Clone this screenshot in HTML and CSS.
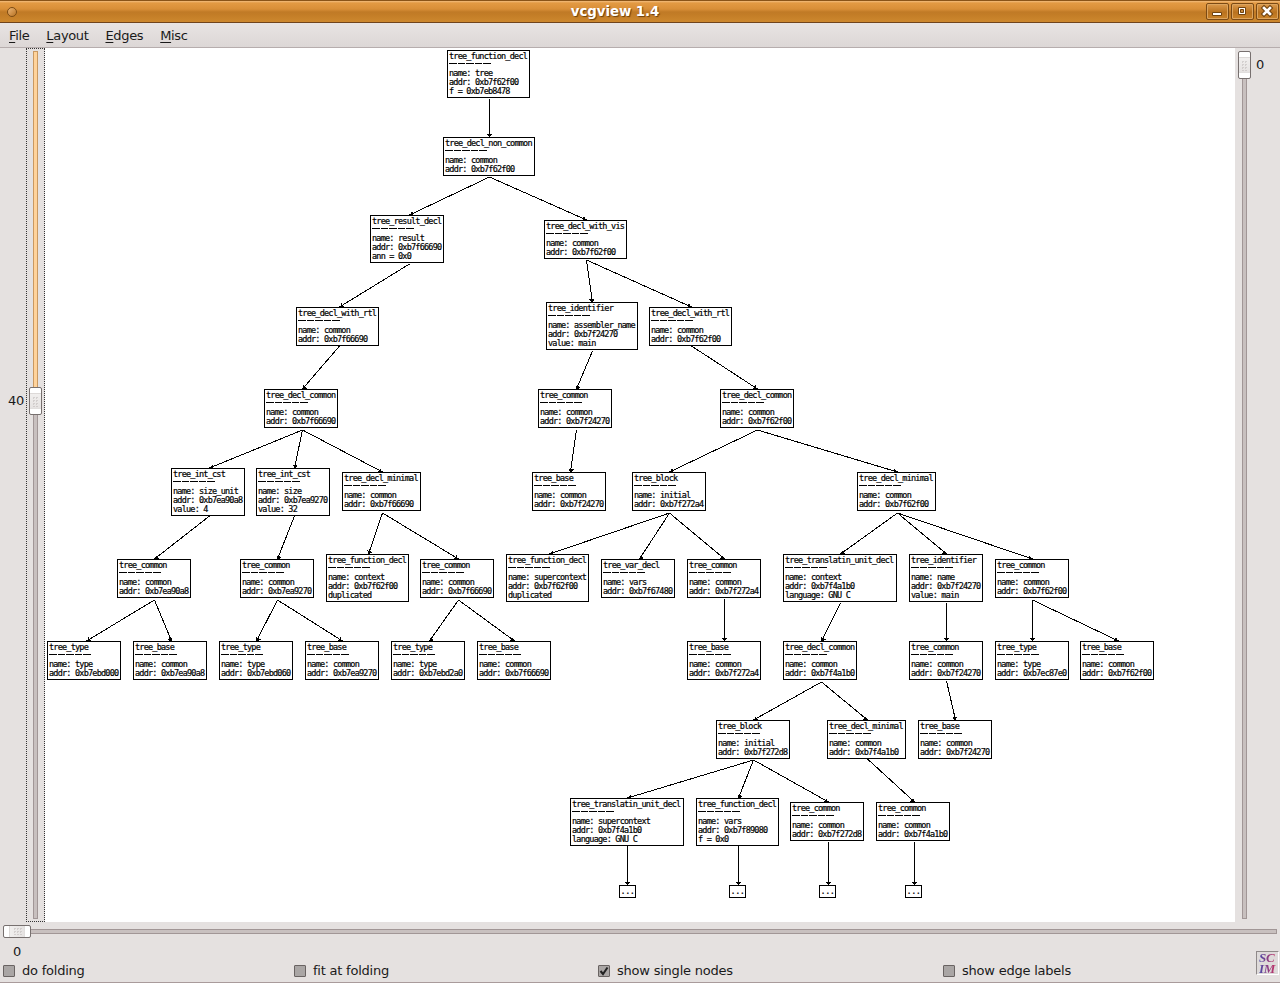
FILE: index.html
```html
<!DOCTYPE html>
<html lang="en">
<head>
<meta charset="utf-8">
<title>vcgview 1.4</title>
<link rel="stylesheet" href="styles.css">
</head>
<body>
<div class="window">
  <header class="titlebar">
    <span class="orb"></span>
    <h1 class="title">vcgview 1.4</h1>
    <div class="controls">
      <span class="control"><svg width="21" height="15" viewBox="0 0 21 15"><path d="M5.500 8.500h9v3h-9z" fill="#fff" stroke="#70430f"/></svg></span>
      <span class="control"><svg width="21" height="15" viewBox="0 0 21 15"><path d="M6.500 3.500h7v7h-7z" fill="#fff" stroke="#70430f"/><path d="M8.500 5.500h3v3h-3z" fill="#c98b3e" stroke="#70430f"/></svg></span>
      <span class="control"><svg width="21" height="15" viewBox="0 0 21 15"><path d="M7 4l6 6M13 4l-6 6" stroke="#70430f" stroke-width="4.600" stroke-linecap="square"/><path d="M7 4l6 6M13 4l-6 6" stroke="#fff" stroke-width="2.600" stroke-linecap="square"/></svg></span>
    </div>
  </header>
  <nav class="menubar">
    <span><u>F</u>ile</span><span><u>L</u>ayout</span><span><u>E</u>dges</span><span><u>M</u>isc</span>
  </nav>
  <main class="work">
    <div class="side left">
      <span class="value">40</span>
      <div class="scale focus"><div class="trough"><div class="fill"></div></div><div class="thumb at-forty"></div></div>
    </div>
    <section class="canvas" id="canvas">
      <svg class="edges" id="edges" width="1190" height="874" viewBox="45 48 1190 874"></svg>
    </section>
    <div class="side right">
      <div class="scale"><div class="trough"></div><div class="thumb at-start"></div></div>
      <span class="value">0</span>
    </div>
  </main>
  <div class="hscale"><div class="htrough"></div><div class="thumb wide"></div></div>
  <div class="hvalue">0</div>
  <footer class="options">
    <label><i class="box"></i>do folding</label>
    <label><i class="box"></i>fit at folding</label>
    <label><i class="box"><svg width="10" height="10" viewBox="0 0 10 10"><path d="M1.500 5l2.500 3L8.500 1.500" fill="none" stroke="#222" stroke-width="2"/></svg></i>show single nodes</label>
    <label><i class="box"></i>show edge labels</label>
  </footer>
  <div class="scim"><span>SC</span><span>IM</span></div>
</div>
<script src="graph.js"></script>
</body>
</html>
```
FILE: styles.css
```css
* { box-sizing: border-box; }
body { margin: 0; background: #e5e1e0; font: 13px/16px "DejaVu Sans", sans-serif; letter-spacing: -.220px; color: #1a1a1a; }
.window { position: relative; width: 1280px; height: 983px; display: flex; flex-direction: column; overflow: hidden; border-bottom: 1px solid #a99b9b; }
.titlebar { height: 23px; display: flex; align-items: center; padding: 0 1px 0 7px; border-top: 1px solid #8a5418; border-bottom: 1px solid #70441c;
  background: linear-gradient(#f3bd7c 0, #e39a43 2px, #d98f38 8px, #c07a26 11px, #c37d27 14px, #cd882e 21px); }
.orb { width: 10px; height: 10px; border: 1px solid #7d4c14; border-radius: 50%; background: linear-gradient(135deg, #edb677, #b87323); }
.title { flex: 1; margin: 0; padding: 0 0 1px 7px; text-align: center; font-size: 13.330px; line-height: 19px; letter-spacing: -.050px; font-weight: bold; color: #fff; text-shadow: 1px 1px 1px #6d3f0b; }
.controls { display: flex; gap: 2px; }
.control { width: 23px; height: 17px; border: 1px solid #7b4a14; border-radius: 2px; background: linear-gradient(#dc9a4c, #b9721f 55%, #cb8429); box-shadow: inset 0 0 0 1px #dda55f; }
.control svg { display: block; }
.menubar { height: 25px; display: flex; gap: 17px; padding: 5px 9px 3px; border-bottom: 1px solid #b6adad; background: linear-gradient(#e8e4e3, #dcd7d6); letter-spacing: -.350px; }
.menubar u { text-underline-offset: 2px; }
.work { height: 874px; display: flex; }
.side { width: 45px; display: flex; }
.left .value { width: 26px; padding: 345px 0 0 8px; }
.right .value { padding: 9px 0 0 2px; }
.scale { position: relative; width: 19px; padding: 3px 0 3px 7px; }
.focus { border: 1px dotted #333; padding: 2px 0 2px 6px; }
.trough { width: 5px; height: 100%; border: 1px solid #a19696; background: #c8c0bf; }
.fill { width: 5px; height: 338px; margin: -1px; border: 1px solid #c99962; background: #ffd39b; }
.thumb { position: absolute; width: 13px; height: 28px; left: 2px; border: 1px solid #77706f; border-radius: 2px;
  background: linear-gradient(#fff 5px, #c9c4c2 5px, #f1efee 6px, #e6e3e2 20px, #c3bebc 20px, #fff 21px); }
.thumb::after { content: ""; position: absolute; left: 2px; top: 9px; width: 7px; height: 10px; background: conic-gradient(#b5afae 25%, transparent 0) 0 0 / 3px 3px; opacity: .450; }
.at-forty { top: 338px; }
.right .thumb { left: 3px; }
.at-start { top: 3px; }
.canvas { position: relative; width: 1190px; height: 874px; background: #fff; }
.edges { display: block; shape-rendering: crispEdges; }
.edges line { stroke: #000; stroke-width: 1; }
.node { position: absolute; border: 1px solid #000; padding: 1px 0 0 1px; background: #fff; font: 8.500px/9px "DejaVu Sans Mono", monospace; letter-spacing: -.781px; -webkit-text-stroke: .2px #000; color: #000; white-space: pre; }
.node .rule { width: 43px; height: 8px; background: repeating-linear-gradient(90deg, #000 0 7.600px, transparent 7.600px 8.600px) 0 2px / 43px 1px no-repeat; }
.folded { padding: 1px 0 0; text-align: center; letter-spacing: -.500px; }
.hscale { position: relative; height: 18px; padding: 7px 3px 0; }
.htrough { height: 5px; border: 1px solid #a19696; background: #c8c0bf; }
.wide { top: 3px; left: 3px; width: 28px; height: 13px; background: linear-gradient(90deg, #fff 5px, #c9c4c2 5px, #f1efee 6px, #e6e3e2 20px, #c3bebc 20px, #fff 21px); }
.wide::after { left: 9px; top: 2px; width: 10px; height: 7px; }
.hvalue { height: 22px; padding: 4px 0 0 13px; }
.options { display: grid; grid-template-columns: 291px 304px 345px 1fr; padding-left: 3px; }
.options label { display: flex; align-items: center; gap: 7px; height: 17px; }
.box { width: 12px; height: 12px; border: 1px solid #696362; border-radius: 1px; background: #aaa6a5; }
.box svg { display: block; }
.scim { position: absolute; left: 1256px; top: 951px; width: 23px; height: 24px; padding-left: 2px; border: 1px solid #fff; border-top-color: #8f8989; border-left-color: #8f8989; background: #dedada; font: italic bold 13px/11px "Liberation Serif", serif; }
.scim span { display: block; width: 18px; height: 11px; color: transparent; background: linear-gradient(90deg, #4a49a8, #d0315f); -webkit-background-clip: text; background-clip: text; }
```
FILE: graph.js
```js
// Each node: [id, x, y, width, lines, outgoing edge y, targets]
const nodes = [
  ["a", 447, 50, 83, "tree_function_decl|name: tree|addr: 0xb7f62f00|f = 0xb7eb8478", 99, "b"],
  ["b", 443, 137, 92, "tree_decl_non_common|name: common|addr: 0xb7f62f00", 177, "c d"],
  ["c", 370, 215, 74, "tree_result_decl|name: result|addr: 0xb7f66690|ann = 0x0", 264, "e"],
  ["d", 544, 220, 83, "tree_decl_with_vis|name: common|addr: 0xb7f62f00", 260, "f g"],
  ["e", 296, 307, 83, "tree_decl_with_rtl|name: common|addr: 0xb7f66690", 346, "h"],
  ["f", 546, 302, 92, "tree_identifier|name: assembler_name|addr: 0xb7f24270|value: main", 351, "i"],
  ["g", 649, 307, 83, "tree_decl_with_rtl|name: common|addr: 0xb7f62f00", 346, "j"],
  ["h", 264, 389, 74, "tree_decl_common|name: common|addr: 0xb7f66690", 430, "k l m"],
  ["i", 538, 389, 74, "tree_common|name: common|addr: 0xb7f24270", 430, "n"],
  ["j", 720, 389, 74, "tree_decl_common|name: common|addr: 0xb7f62f00", 430, "o p"],
  ["k", 171, 468, 74, "tree_int_cst|name: size_unit|addr: 0xb7ea90a8|value: 4", 516, "q"],
  ["l", 256, 468, 74, "tree_int_cst|name: size|addr: 0xb7ea9270|value: 32", 516, "r"],
  ["m", 342, 472, 79, "tree_decl_minimal|name: common|addr: 0xb7f66690", 513, "s t"],
  ["n", 532, 472, 74, "tree_base|name: common|addr: 0xb7f24270", 0, ""],
  ["o", 632, 472, 74, "tree_block|name: initial|addr: 0xb7f272a4", 513, "u v w"],
  ["p", 857, 472, 79, "tree_decl_minimal|name: common|addr: 0xb7f62f00", 513, "x y z"],
  ["q", 117, 559, 74, "tree_common|name: common|addr: 0xb7ea90a8", 600, "A B"],
  ["r", 240, 559, 74, "tree_common|name: common|addr: 0xb7ea9270", 600, "C D"],
  ["s", 326, 554, 83, "tree_function_decl|name: context|addr: 0xb7f62f00|duplicated", 0, ""],
  ["t", 420, 559, 74, "tree_common|name: common|addr: 0xb7f66690", 600, "E F"],
  ["u", 506, 554, 83, "tree_function_decl|name: supercontext|addr: 0xb7f62f00|duplicated", 0, ""],
  ["v", 601, 559, 74, "tree_var_decl|name: vars|addr: 0xb7f67480", 0, ""],
  ["w", 687, 559, 74, "tree_common|name: common|addr: 0xb7f272a4", 599, "G"],
  ["x", 783, 554, 114, "tree_translatin_unit_decl|name: context|addr: 0xb7f4a1b0|language: GNU C", 603, "H"],
  ["y", 909, 554, 74, "tree_identifier|name: name|addr: 0xb7f24270|value: main", 603, "I"],
  ["z", 995, 559, 74, "tree_common|name: common|addr: 0xb7f62f00", 600, "J K"],
  ["A", 47, 641, 74, "tree_type|name: type|addr: 0xb7ebd000", 0, ""],
  ["B", 133, 641, 74, "tree_base|name: common|addr: 0xb7ea90a8", 0, ""],
  ["C", 219, 641, 74, "tree_type|name: type|addr: 0xb7ebd060", 0, ""],
  ["D", 305, 641, 74, "tree_base|name: common|addr: 0xb7ea9270", 0, ""],
  ["E", 391, 641, 74, "tree_type|name: type|addr: 0xb7ebd2a0", 0, ""],
  ["F", 477, 641, 74, "tree_base|name: common|addr: 0xb7f66690", 0, ""],
  ["G", 687, 641, 74, "tree_base|name: common|addr: 0xb7f272a4", 0, ""],
  ["H", 783, 641, 74, "tree_decl_common|name: common|addr: 0xb7f4a1b0", 682, "L M"],
  ["I", 909, 641, 74, "tree_common|name: common|addr: 0xb7f24270", 681, "N"],
  ["J", 995, 641, 74, "tree_type|name: type|addr: 0xb7ec87e0", 0, ""],
  ["K", 1080, 641, 74, "tree_base|name: common|addr: 0xb7f62f00", 0, ""],
  ["L", 716, 720, 74, "tree_block|name: initial|addr: 0xb7f272d8", 760, "O P Q"],
  ["M", 827, 720, 79, "tree_decl_minimal|name: common|addr: 0xb7f4a1b0", 759, "R"],
  ["N", 918, 720, 74, "tree_base|name: common|addr: 0xb7f24270", 0, ""],
  ["O", 570, 798, 114, "tree_translatin_unit_decl|name: supercontext|addr: 0xb7f4a1b0|language: GNU C", 846, "S"],
  ["P", 696, 798, 83, "tree_function_decl|name: vars|addr: 0xb7f89080|f = 0x0", 846, "T"],
  ["Q", 790, 802, 74, "tree_common|name: common|addr: 0xb7f272d8", 842, "U"],
  ["R", 876, 802, 74, "tree_common|name: common|addr: 0xb7f4a1b0", 842, "V"],
  ["S", 619, 885, 17, "...", 0, ""],
  ["T", 729, 885, 17, "...", 0, ""],
  ["U", 819, 885, 17, "...", 0, ""],
  ["V", 905, 885, 17, "...", 0, ""]
];
// Edge attachment points that differ from the centre of the node
const ports = { c: 409, e: 339, h: 302, k: 209, l: 294, i: 576, n: 570, t: 458, u: 549, v: 639, Q: 828, R: 914, S: 627, A: 86, B: 171, C: 256, E: 429, H: 821, K: 1118 };
const canvas = document.getElementById("canvas");
const edges = document.getElementById("edges");
const byId = Object.fromEntries(nodes.map(n => [n[0], n]));
const port = n => (ports[n[0]] || Math.floor(n[1] + n[3] / 2 + 0.5)) + 0.5;

function add(tag, attrs) {
  const el = document.createElementNS("http://www.w3.org/2000/svg", tag);
  for (const key in attrs) el.setAttribute(key, attrs[key]);
  edges.appendChild(el);
}

for (const n of nodes) {
  const [id, x, y, w, text, startY, targets] = n;
  const lines = text.split("|");
  const div = document.createElement("div");
  div.className = lines.length > 1 ? "node" : "node folded";
  div.style.left = x - 45 + "px";
  div.style.top = y - 48 + "px";
  div.style.width = w + "px";
  div.style.height = (lines.length > 1 ? 12 + lines.length * 9 : 13) + "px";
  lines.forEach((line, i) => {
    const row = document.createElement("div");
    row.textContent = line;
    div.appendChild(row);
    if (i === 0 && lines.length > 1) {
      const rule = document.createElement("div");
      rule.className = "rule";
      div.appendChild(rule);
    }
  });
  canvas.appendChild(div);

  for (const t of targets.split(" ").filter(Boolean)) {
    const child = byId[t];
    const x1 = port(n), x2 = port(child), y2 = child[2];
    add("line", { x1, y1: startY, x2, y2 });
    const len = Math.hypot(x2 - x1, y2 - startY);
    const ux = (x2 - x1) / len, uy = (y2 - startY) / len;
    const bx = x2 - ux * 4, by = y2 - uy * 3;
    add("polygon", { points: `${x2},${y2 + 1} ${bx - uy * 2.6},${by + ux * 2.6} ${bx + uy * 2.6},${by - ux * 2.6}` });
  }
}
```
